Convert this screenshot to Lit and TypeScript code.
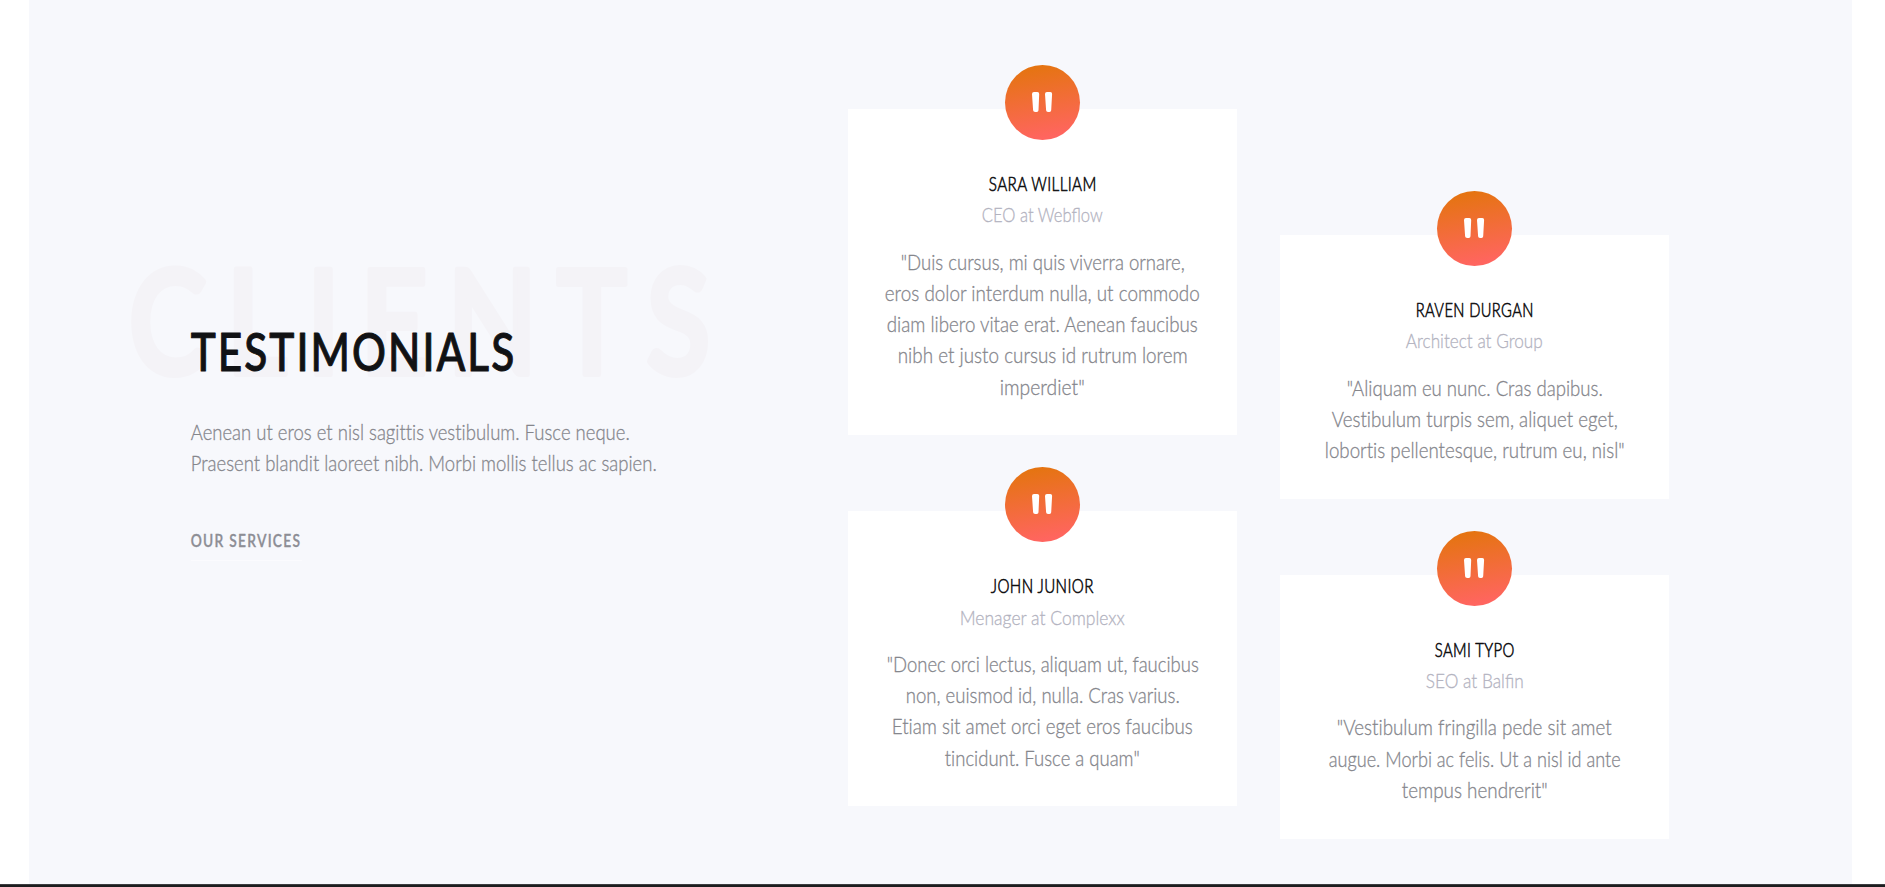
import { LitElement, html, css, svg } from "lit";
import { customElement, property } from "lit/decorators.js";

interface Line {
  text: string;
  width: number;
}

interface Testimonial {
  name: Line;
  role: Line;
  quote: Line[];
}

const line = (text: string, width: number): Line => ({ text, width });

const firstColumn: Testimonial[] = [
  {
    name: line("SARA WILLIAM", 108),
    role: line("CEO at Webflow", 121),
    quote: [
      line('"Duis cursus, mi quis viverra ornare,', 284),
      line("eros dolor interdum nulla, ut commodo", 315),
      line("diam libero vitae erat. Aenean faucibus", 311),
      line("nibh et justo cursus id rutrum lorem", 290),
      line('imperdiet"', 85),
    ],
  },
  {
    name: line("JOHN JUNIOR", 103),
    role: line("Menager at Complexx", 165),
    quote: [
      line('"Donec orci lectus, aliquam ut, faucibus', 312),
      line("non, euismod id, nulla. Cras varius.", 274),
      line("Etiam sit amet orci eget eros faucibus", 301),
      line('tincidunt. Fusce a quam"', 195),
    ],
  },
];

const secondColumn: Testimonial[] = [
  {
    name: line("RAVEN DURGAN", 118),
    role: line("Architect at Group", 137),
    quote: [
      line('"Aliquam eu nunc. Cras dapibus.', 256),
      line("Vestibulum turpis sem, aliquet eget,", 286),
      line('lobortis pellentesque, rutrum eu, nisl"', 300),
    ],
  },
  {
    name: line("SAMI TYPO", 80),
    role: line("SEO at Balfin", 98),
    quote: [
      line('"Vestibulum fringilla pede sit amet', 275),
      line("augue. Morbi ac felis. Ut a nisl id ante", 292),
      line('tempus hendrerit"', 146),
    ],
  },
];

/* One line of condensed type, fitted to a given measure. */
const fitted = (l: Line, kind: string, height: number, baseline: number) => html`
  <svg class="line ${kind}" width=${l.width} height=${height}>
    ${svg`<text x="-0.25" y=${baseline} textLength=${l.width} lengthAdjust="spacingAndGlyphs">${l.text}</text>`}
  </svg>
`;

const typeStyles = css`
  .line {
    display: block;
    overflow: visible;
    font-family: Lato, "Open Sans", sans-serif;
    stroke-linejoin: round;
  }
  .body {
    font-size: 21.3px;
    font-weight: 300;
    fill: #85868c;
    stroke: #85868c;
    stroke-width: 0.3px;
    font-variant-ligatures: none;
  }
`;

@customElement("testimonial-card")
export class TestimonialCard extends LitElement {
  @property({ attribute: false }) item!: Testimonial;

  static styles = [
    typeStyles,
    css`
      :host {
        display: block;
        position: relative;
        box-sizing: border-box;
        width: 389px;
        padding: 61px 0 29.5px;
        background: #fff;
      }
      .badge {
        position: absolute;
        top: -44px;
        left: 157px;
        width: 75px;
        height: 75px;
        border-radius: 50%;
        background: linear-gradient(170deg, #ff655f 10%, #e57411 92%);
        background: linear-gradient(170deg, #e57411 8%, #ff655f 90%);
      }
      .badge svg {
        display: block;
      }
      .stack {
        display: flex;
        flex-direction: column;
        align-items: center;
      }
      .quote {
        margin-top: 17px;
      }
      .name {
        font-size: 19.5px;
        font-weight: 300;
        letter-spacing: 0.5px;
        fill: #0e0e10;
        stroke: #0e0e10;
        stroke-width: 0.6px;
      }
      .role {
        font-size: 20.5px;
        font-weight: 300;
        fill: #b3b3bf;
        stroke: #b3b3bf;
        stroke-width: 0.3px;
      }
    `,
  ];

  render() {
    return html`
      <div class="badge">
        <svg width="75" height="75" viewBox="0 0 75 75" fill="#fff">
          <path d="M27 29Q27 27 29 27H32.3Q34.3 27 34.2 29L33.5 45.3Q33.4 47 31.8 47H30.2Q28.2 47 28.1 45.3Z" />
          <path d="M40 29Q40 27 42 27H45.3Q47.2 27 47.1 29L46.2 45.3Q46.1 47 44.5 47H43Q41.2 47 41.1 45.3Z" />
        </svg>
      </div>
      <div class="stack">
        ${fitted(this.item.name, "name", 31.25, 21)}
        ${fitted(this.item.role, "role", 31.25, 21)}
      </div>
      <div class="stack quote">
        ${this.item.quote.map((l) => fitted(l, "body", 31.25, 20))}
      </div>
    `;
  }
}

@customElement("app-root")
export class AppRoot extends LitElement {
  static styles = [
    typeStyles,
    css`
      :host {
        display: block;
        height: 887px;
        overflow: hidden;
        background: #fff;
      }
      .section {
        display: flex;
        box-sizing: border-box;
        height: 884px;
        margin: 0 33px 0 29px;
        background: #f7f8fc;
      }
      .intro {
        position: relative;
        box-sizing: border-box;
        width: 819px;
        padding: 322px 0 0 162px;
      }
      .ghost {
        position: absolute;
        top: 257px;
        left: 100px;
      }
      .clients {
        font-size: 145px;
        font-weight: 600;
        letter-spacing: 24px;
        fill: #f4f3f7;
        stroke: #f4f3f7;
        stroke-width: 6px;
      }
      .heading {
        position: relative;
        margin-bottom: 97px;
        height: 0;
      }
      .title {
        font-size: 52px;
        font-weight: 500;
        letter-spacing: 2.5px;
        fill: #111214;
        stroke: #111214;
        stroke-width: 1px;
      }
      .link {
        display: inline-block;
        margin-top: 44px;
        border-bottom: 1px solid #fbfbfe;
      }
      .services {
        font-size: 16.5px;
        font-weight: 600;
        letter-spacing: 1.5px;
        fill: #8d8e95;
        stroke: #8d8e95;
        stroke-width: 0.3px;
      }
      .column {
        display: flex;
        flex-direction: column;
        gap: 76px;
        padding-top: 109px;
      }
      .column.lower {
        margin-left: 43px;
        padding-top: 235px;
      }
      .footer {
        box-sizing: border-box;
        height: 3px;
        background: #1d1d1f;
        border-top: 1px solid #3d3d40;
      }
    `,
  ];

  render() {
    const column = (items: Testimonial[]) =>
      items.map((item) => html`<testimonial-card .item=${item}></testimonial-card>`);
    return html`
      <section class="section">
        <div class="intro">
          <div class="ghost">${fitted(line("CLIENTS", 601), "clients", 130, 116.5)}</div>
          <div class="heading">${fitted(line("TESTIMONIALS", 325.5), "title", 60, 48.5)}</div>
          ${fitted(line("Aenean ut eros et nisl sagittis vestibulum. Fusce neque.", 439), "body", 31.25, 21)}
          ${fitted(line("Praesent blandit laoreet nibh. Morbi mollis tellus ac sapien.", 466), "body", 31.25, 21)}
          <a class="link">${fitted(line("OUR SERVICES", 110.5), "services", 34, 21)}</a>
        </div>
        <div class="column">${column(firstColumn)}</div>
        <div class="column lower">${column(secondColumn)}</div>
      </section>
      <div class="footer"></div>
    `;
  }
}
